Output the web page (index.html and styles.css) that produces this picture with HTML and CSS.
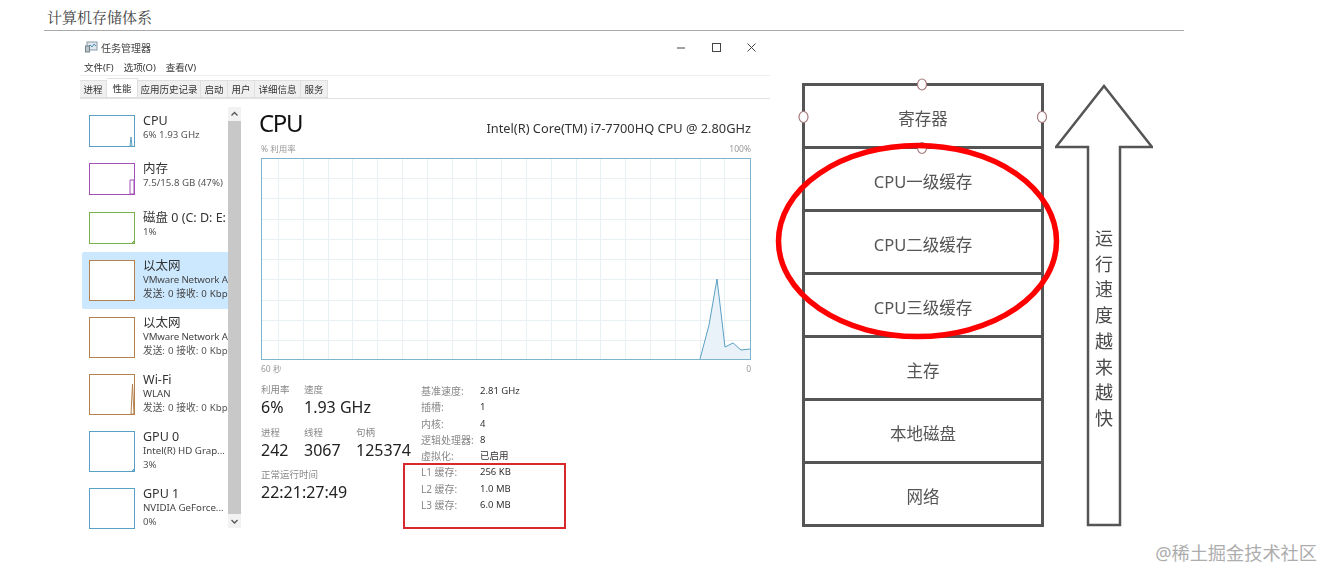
FILE: index.html
```html
<!DOCTYPE html>
<html lang="zh-CN">
<head>
    <meta charset="UTF-8">
    <meta name="viewport" content="width=device-width, initial-scale=1.0">
    <title>计算机存储体系</title>
    <link rel="stylesheet" href="styles.css">
</head>
<body>
    <h4 class="page-title">计算机存储体系</h4>

    <div class="figure">
        <div class="taskmgr">
            <div class="titlebar">
                <svg class="app-icon" viewBox="0 0 13 12"><rect x="2" y="1" width="10" height="8" fill="#dfe8ee" stroke="#8a9aa5"/><path d="M3 6l2-2 2 2 2-3 2 2" fill="none" stroke="#4d8fb5"/><rect x="0.5" y="5" width="4" height="6" fill="#b9c4cb" stroke="#77848c"/></svg>
                <span class="app-name">任务管理器</span>
                <div class="win-buttons">
                    <svg viewBox="0 0 9 9"><path d="M0 5h8"/></svg>
                    <svg viewBox="0 0 9 9"><rect x="0.5" y="0.5" width="8" height="8"/></svg>
                    <svg viewBox="0 0 9 9"><path d="M0.5 0.5l8 8M8.5 0.5l-8 8"/></svg>
                </div>
            </div>
            <div class="menubar">
                <span>文件(F)</span>
                <span>选项(O)</span>
                <span>查看(V)</span>
            </div>
            <div class="tabs">
                <span class="tab tab-2">进程</span>
                <span class="tab tab-2 active">性能</span>
                <span class="tab tab-6">应用历史记录</span>
                <span class="tab tab-2">启动</span>
                <span class="tab tab-2">用户</span>
                <span class="tab tab-4">详细信息</span>
                <span class="tab tab-2">服务</span>
            </div>
            <div class="perf">
                <div class="sidebar">
                    <div class="device-list">
                        <div class="device">
                            <svg class="thumb blue" viewBox="0 0 46 32"><path class="spark" d="M41 31l1-9 1 9z"/><rect class="frame" x="0.5" y="0.5" width="45" height="31"/></svg>
                            <div class="device-text">
                                <div class="device-name">CPU</div>
                                <div class="device-sub">6% 1.93 GHz</div>
                            </div>
                        </div>
                        <div class="device">
                            <svg class="thumb purple" viewBox="0 0 46 32"><path class="spark" d="M41 31v-14h4v14z"/><rect class="frame" x="0.5" y="0.5" width="45" height="31"/></svg>
                            <div class="device-text">
                                <div class="device-name">内存</div>
                                <div class="device-sub">7.5/15.8 GB (47%)</div>
                            </div>
                        </div>
                        <div class="device">
                            <svg class="thumb green" viewBox="0 0 46 32"><path class="spark" d="M43 31h2v-2z"/><rect class="frame" x="0.5" y="0.5" width="45" height="31"/></svg>
                            <div class="device-text">
                                <div class="device-name">磁盘 0 (C: D: E:</div>
                                <div class="device-sub">1%</div>
                            </div>
                        </div>
                        <div class="device tall selected">
                            <svg class="thumb orange" viewBox="0 0 46 41"><rect class="fill" x="1" y="1" width="44" height="39"/><rect class="frame" x="0.5" y="0.5" width="45" height="40"/></svg>
                            <div class="device-text">
                                <div class="device-name">以太网</div>
                                <div class="device-sub dark adapter">VMware Network A</div>
                                <div class="device-sub dark traffic">发送: 0 接收: 0 Kbp</div>
                            </div>
                        </div>
                        <div class="device tall">
                            <svg class="thumb orange" viewBox="0 0 46 41"><rect class="frame" x="0.5" y="0.5" width="45" height="40"/></svg>
                            <div class="device-text">
                                <div class="device-name">以太网</div>
                                <div class="device-sub adapter">VMware Network A</div>
                                <div class="device-sub traffic">发送: 0 接收: 0 Kbp</div>
                            </div>
                        </div>
                        <div class="device tall">
                            <svg class="thumb orange" viewBox="0 0 46 41"><path class="spark" d="M42 40l1.500-30 1.500 30z"/><rect class="frame" x="0.5" y="0.5" width="45" height="40"/></svg>
                            <div class="device-text">
                                <div class="device-name">Wi-Fi</div>
                                <div class="device-sub">WLAN</div>
                                <div class="device-sub traffic">发送: 0 接收: 0 Kbp</div>
                            </div>
                        </div>
                        <div class="device tall">
                            <svg class="thumb blue" viewBox="0 0 46 41"><path class="spark" d="M43 40h2v-2z"/><rect class="frame" x="0.5" y="0.5" width="45" height="40"/></svg>
                            <div class="device-text">
                                <div class="device-name">GPU 0</div>
                                <div class="device-sub">Intel(R) HD Grap...</div>
                                <div class="device-sub">3%</div>
                            </div>
                        </div>
                        <div class="device tall">
                            <svg class="thumb blue" viewBox="0 0 46 41"><rect class="frame" x="0.5" y="0.5" width="45" height="40"/></svg>
                            <div class="device-text">
                                <div class="device-name">GPU 1</div>
                                <div class="device-sub">NVIDIA GeForce...</div>
                                <div class="device-sub">0%</div>
                            </div>
                        </div>
                    </div>
                    <div class="scrollbar">
                        <svg class="scroll-btn" viewBox="0 0 13 14"><path d="M3.500 8.500l3-3 3 3"/></svg>
                        <div class="scroll-thumb"></div>
                        <svg class="scroll-btn" viewBox="0 0 13 14"><path d="M3.500 6l3 3 3-3"/></svg>
                    </div>
                </div>

                <div class="detail">
                    <div class="detail-head">
                        <span class="detail-title">CPU</span>
                        <span class="cpu-model">Intel(R) Core(TM) i7-7700HQ CPU @ 2.80GHz</span>
                    </div>
                    <div class="axis-row axis-top"><span>% 利用率</span><span>100%</span></div>
                    <svg class="chart" viewBox="0 0 490 202">
                        <path class="grid" d="M17.500 0V202M42.500 0V202M67.500 0V202M91.500 0V202M116.500 0V202M141.500 0V202M166.500 0V202M191.500 0V202M215.500 0V202M240.500 0V202M265.500 0V202M290.500 0V202M315.500 0V202M339.500 0V202M364.500 0V202M389.500 0V202M414.500 0V202M439.500 0V202M463.500 0V202M0 20.500H490M0 40.500H490M0 61.500H490M0 81.500H490M0 101.500H490M0 121.500H490M0 142.500H490M0 162.500H490M0 182.500H490"/>
                        <path class="area" d="M439 201L448 167L456 121L464 189L472 185L480 192L489 191V201Z"/>
                        <path class="line" d="M439 201L448 167L456 121L464 189L472 185L480 192L489 191"/>
                        <rect class="chart-frame" x="0.500" y="0.500" width="489" height="201"/>
                    </svg>
                    <div class="axis-row axis-bottom"><span>60 秒</span><span>0</span></div>

                    <div class="stats-area">
                        <div class="stats">
                            <div class="stat"><div class="stat-label">利用率</div><div class="stat-value">6%</div></div>
                            <div class="stat"><div class="stat-label">速度</div><div class="stat-value">1.93 GHz</div></div>
                            <div class="stat"></div>
                            <div class="stat"><div class="stat-label">进程</div><div class="stat-value">242</div></div>
                            <div class="stat"><div class="stat-label">线程</div><div class="stat-value">3067</div></div>
                            <div class="stat"><div class="stat-label">句柄</div><div class="stat-value">125374</div></div>
                            <div class="stat stat-wide"><div class="stat-label">正常运行时间</div><div class="stat-value">22:21:27:49</div></div>
                        </div>
                        <div class="specs">
                            <span class="spec-label">基准速度:</span><span>2.81 GHz</span>
                            <span class="spec-label">插槽:</span><span>1</span>
                            <span class="spec-label">内核:</span><span>4</span>
                            <span class="spec-label">逻辑处理器:</span><span>8</span>
                            <span class="spec-label">虚拟化:</span><span>已启用</span>
                            <span class="spec-label">L1 缓存:</span><span>256 KB</span>
                            <span class="spec-label">L2 缓存:</span><span>1.0 MB</span>
                            <span class="spec-label">L3 缓存:</span><span>6.0 MB</span>
                            <div class="red-box"></div>
                        </div>
                    </div>
                </div>
            </div>
        </div>

        <div class="pyramid">
            <div class="levels">
                <div class="level">寄存器</div>
                <div class="level">CPU一级缓存</div>
                <div class="level">CPU二级缓存</div>
                <div class="level">CPU三级缓存</div>
                <div class="level">主存</div>
                <div class="level">本地磁盘</div>
                <div class="level">网络</div>
            </div>
            <svg class="marks" viewBox="0 0 300 260">
                <ellipse class="handle" cx="146" cy="1.500" rx="4.500" ry="5.500"/>
                <ellipse class="handle" cx="27.500" cy="34" rx="4.500" ry="5.500"/>
                <ellipse class="handle" cx="266" cy="34" rx="4.500" ry="5.500"/>
                <ellipse class="handle" cx="146" cy="65" rx="4.500" ry="5.500"/>
                <ellipse class="ring" cx="141.500" cy="158" rx="139" ry="95.500"/>
            </svg>
            <div class="speed-arrow">
                <svg class="arrow-shape" viewBox="0 0 98 443"><path d="M1 63L49 2L97 63H65V441H33V63Z"/></svg>
                <div class="arrow-text">运行速度越来越快</div>
            </div>
        </div>
    </div>

    <div class="watermark">@稀土掘金技术社区</div>
</body>
</html>
```

FILE: styles.css
```css
body {
    margin: 0;
    width: 1335px;
    height: 582px;
    overflow: hidden;
    position: relative;
    background-color: white;
    font-family: "Noto Sans", "Noto Sans CJK SC", sans-serif;
    color: #333;
}
.page-title {
    box-sizing: border-box;
    width: 1140px;
    height: 31px;
    margin: 0 0 0 44px;
    padding: 7px 0 0 3px;
    border-bottom: 1px solid #aaa;
    font-family: "Noto Serif CJK SC", "Noto Sans CJK SC", serif;
    font-size: 15px;
    font-weight: normal;
    line-height: 20px;
    color: #444;
}
.figure {
    display: flex;
    align-items: flex-start;
    margin-top: 8px;
}

/* task manager */
.taskmgr {
    width: 690px;
    margin-left: 80px;
    filter: blur(0.45px);
}
.titlebar {
    display: flex;
    align-items: center;
    height: 16px;
    padding-left: 5px;
}
.app-icon {
    width: 13px;
    height: 12px;
}
.app-name {
    margin-left: 3px;
    font-size: 10px;
    color: #444;
}
.win-buttons {
    display: flex;
    gap: 26px;
    margin-left: auto;
    margin-right: 14px;
}
.win-buttons svg {
    width: 9px;
    height: 9px;
    fill: none;
    stroke: #444;
    stroke-width: 1;
}
.menubar {
    display: flex;
    gap: 10px;
    height: 19px;
    padding: 3px 0 0 4px;
    box-sizing: border-box;
    margin-top: 2px;
    font-size: 9.5px;
    line-height: 16px;
    border-bottom: 1px solid #eee;
}
.tabs {
    display: flex;
    height: 19px;
    margin-top: 4px;
    border-bottom: 1px solid #e2e2e2;
    box-sizing: border-box;
    font-size: 9.5px;
}
.tab {
    box-sizing: border-box;
    height: 18px;
    line-height: 18px;
    text-align: center;
    background-color: #f0f0f0;
    border: 1px solid #e0e0e0;
    border-left: none;
}
.tab-2 { width: 27px; }
.tab-4 { width: 46px; }
.tab-6 { width: 63px; }
.tab.active {
    width: 31px;
    height: 20px;
    margin-top: -2px;
    line-height: 19px;
    background-color: white;
}
.perf {
    display: flex;
    margin-top: 8px;
}
.sidebar {
    display: flex;
    width: 159px;
    margin-left: 2px;
}
.device-list {
    width: 146px;
    flex-shrink: 0;
}
.device {
    display: flex;
    box-sizing: border-box;
    height: 48.33px;
    padding: 8px 0 0 7px;
    overflow: hidden;
    white-space: nowrap;
}
.device.tall {
    height: 57px;
}
.device.selected {
    background-color: #cce8ff;
    border-radius: 2px 0 0 2px;
}
.thumb {
    flex-shrink: 0;
    width: 46px;
    height: 32px;
}
.tall .thumb {
    height: 41px;
}
.frame {
    fill: none;
    stroke-width: 1;
}
.fill {
    fill: white;
}
.blue .frame, .blue .spark { stroke: #5aa0c4; }
.purple .frame, .purple .spark { stroke: #a24fb8; }
.green .frame, .green .spark { stroke: #79b04f; }
.orange .frame, .orange .spark { stroke: #b5824f; }
.spark {
    fill: none;
    stroke-width: 1;
}
.device-text {
    margin-left: 8px;
    margin-top: -2px;
}
.device-name {
    font-size: 12.5px;
    line-height: 15px;
}
.device-sub {
    font-size: 9.7px;
    line-height: 14.5px;
    color: #444;
}
.device-sub:last-child:not(.dark) {
    color: #555;
}
.adapter {
    letter-spacing: -0.15px;
}
.traffic {
    word-spacing: 0.4px;
}
.scrollbar {
    display: flex;
    flex-direction: column;
    width: 13px;
    height: 421px;
}
.scroll-btn {
    width: 13px;
    height: 14px;
    fill: none;
    stroke: #555;
    stroke-width: 1.3;
    background-color: #f2f2f2;
}
.scroll-thumb {
    flex: 1;
    background-color: #c8c8c8;
}
.detail {
    width: 491px;
    margin-left: 19px;
}
.detail-head {
    display: flex;
    align-items: flex-end;
    justify-content: space-between;
    height: 33px;
}
.detail-title {
    font-size: 24px;
    line-height: 31px;
    margin-bottom: 2px;
    margin-left: -1px;
    letter-spacing: -1.4px;
    color: #111;
}
.cpu-model {
    font-size: 12.8px;
    line-height: 24px;
    color: #333;
}
.axis-row {
    display: flex;
    justify-content: space-between;
    font-size: 8.5px;
    color: #999;
    padding-left: 1px;
}
.axis-top {
    height: 18px;
    line-height: 18px;
}
.axis-bottom {
    height: 18px;
    line-height: 18px;
}
.chart {
    display: block;
    width: 490px;
    height: 202px;
    margin-left: 1px;
}
.grid {
    fill: none;
    stroke: #e8f0f4;
    stroke-width: 1;
}
.area {
    fill: #e8f2f8;
}
.line {
    fill: none;
    stroke: #5aa0c4;
    stroke-width: 1;
}
.chart-frame {
    fill: none;
    stroke: #7db5cd;
    stroke-width: 1;
}
.stats-area {
    display: flex;
    padding-left: 1px;
    margin-top: 5px;
}
.stats {
    display: grid;
    grid-template-columns: 43px 52px auto;
    grid-auto-rows: 42.5px;
    width: 160px;
}
.stat-wide {
    grid-column: 1 / 4;
}
.stat-label {
    font-size: 9.5px;
    line-height: 13px;
    color: #888;
}
.stat-value {
    font-size: 16px;
    line-height: 22px;
    color: #222;
    white-space: nowrap;
}
.specs {
    position: relative;
    display: grid;
    grid-template-columns: 59px auto;
    grid-auto-rows: 16.3px;
    align-self: flex-start;
    width: 140px;
    margin-top: 1px;
    font-size: 9.5px;
    line-height: 14px;
}
.spec-label {
    font-size: 10px;
    color: #888;
}
.red-box {
    position: absolute;
    left: -18px;
    top: 79px;
    width: 159px;
    height: 62px;
    border: 2px solid #d9272e;
}

/* storage levels */
.pyramid {
    position: relative;
    display: flex;
    margin: 44px 0 0 32px;
    filter: blur(0.45px);
}
.levels {
    box-sizing: border-box;
    width: 242px;
    border: solid #555;
    border-width: 3px 3px 0;
}
.level {
    box-sizing: border-box;
    height: 63px;
    border-bottom: 3px solid #555;
    font-size: 16.5px;
    line-height: 66px;
    text-align: center;
    color: #555;
}
.marks {
    position: absolute;
    left: -26px;
    top: 0;
    width: 300px;
    height: 260px;
    overflow: visible;
}
.handle {
    fill: white;
    stroke: #a57a7a;
    stroke-width: 1.2;
}
.ring {
    fill: none;
    stroke: #f00;
    stroke-width: 5.5;
}
.speed-arrow {
    position: relative;
    width: 98px;
    height: 443px;
    margin: 1px 0 0 11px;
}
.arrow-shape {
    position: absolute;
    left: 0;
    top: 0;
    width: 98px;
    height: 443px;
    fill: white;
    stroke: #555;
    stroke-width: 2.5;
}
.arrow-text {
    position: absolute;
    left: 37px;
    top: 142px;
    width: 24px;
    font-size: 18px;
    line-height: 25.7px;
    text-align: center;
    color: #4a4a4a;
}
.watermark {
    position: absolute;
    right: 18px;
    top: 541px;
    font-size: 18.2px;
    line-height: 24px;
    color: #adadad;
}
```
